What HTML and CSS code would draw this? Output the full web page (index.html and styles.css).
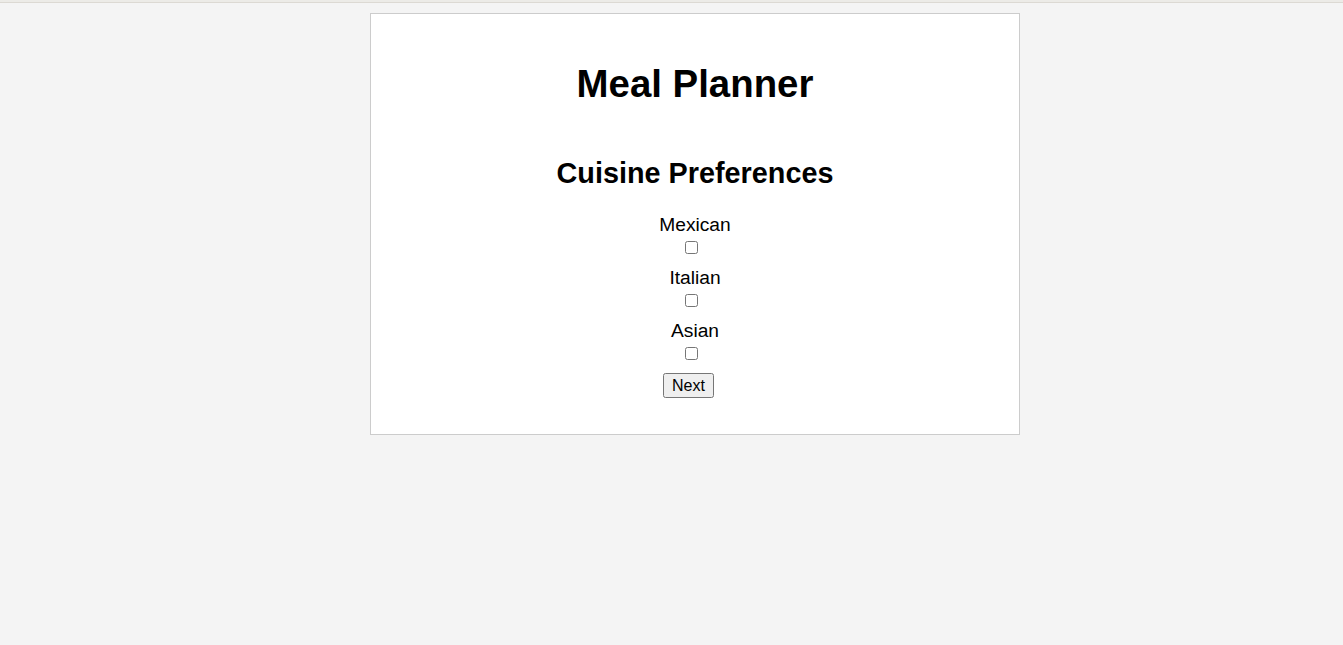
FILE: index.html
```html
<!DOCTYPE html>
<html>
<head>
<meta charset="utf-8">
<title>Meal Planner</title>
<link rel="stylesheet" href="styles.css">
</head>
<body>
<div class="topline"></div>
<div class="page">
  <div class="card">
    <h1 class="title">Meal Planner</h1>
    <h2 class="subtitle">Cuisine Preferences</h2>
    <form class="form">
      <div class="group">
        <label class="label" for="mexican">Mexican</label>
        <input class="check" type="checkbox" id="mexican">
      </div>
      <div class="group">
        <label class="label" for="italian">Italian</label>
        <input class="check" type="checkbox" id="italian">
      </div>
      <div class="group">
        <label class="label" for="asian">Asian</label>
        <input class="check" type="checkbox" id="asian">
      </div>
      <button class="btn" type="button">Next</button>
    </form>
  </div>
</div>
</body>
</html>
```

FILE: styles.css
```css
html, body {
  margin: 0;
  padding: 0;
  background: #f4f4f4;
  font-family: "Liberation Sans", Arial, sans-serif;
}
.topline {
  height: 2px;
  background: #ecebe7;
  border-bottom: 1px solid #dcd9d3;
}
.page {
  padding-top: 10px;
  padding-left: 370px;
}
.card {
  width: 608px;
  padding: 22px 20px 20px;
  background: #fff;
  border: 1px solid #cccccc;
  text-align: center;
  font-size: 19.2px;
}
.title {
  font-size: 38.4px;
  margin: 25.7px 0 0;
}
.subtitle {
  font-size: 28.8px;
  margin: 51.1px 0 23.9px;
}
.form {
  display: flex;
  flex-direction: column;
  align-items: center;
  padding-bottom: 16px;
}
.group {
  display: flex;
  flex-direction: column;
  align-items: center;
  margin-bottom: 10px;
}
.label {
  display: block;
  margin-bottom: 2px;
}
.check {
  margin: 3px 11px 3px 4px;
  width: 13px;
  height: 13px;
}
.btn {
  font-family: "Liberation Sans", Arial, sans-serif;
  font-size: 16px;
  padding: 2px 7px 1px;
  margin-right: 13px;
}
```
